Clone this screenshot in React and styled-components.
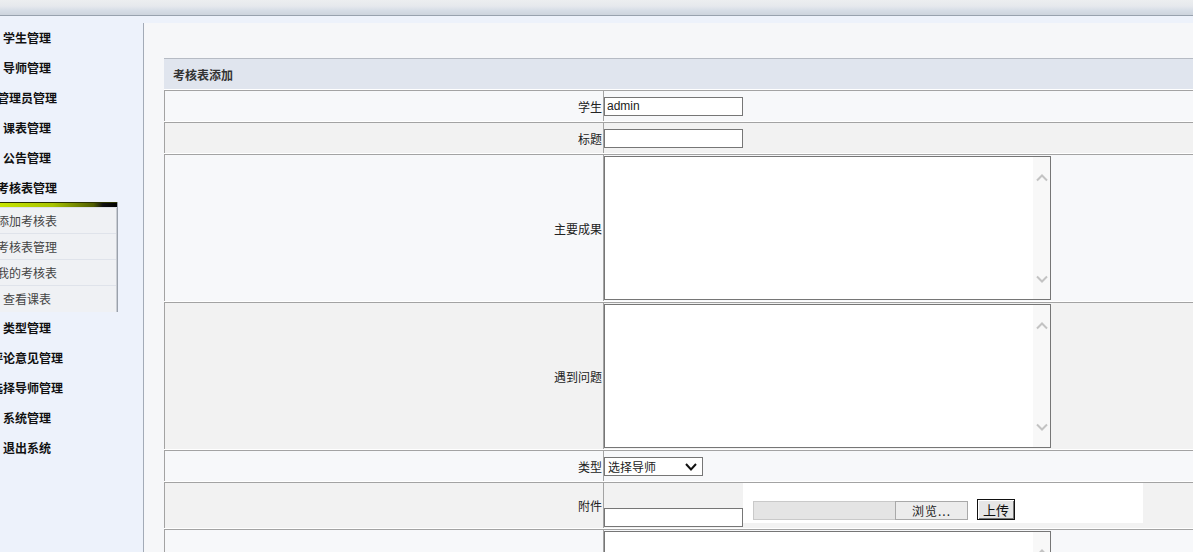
import React from "react";
import styled, { createGlobalStyle } from "styled-components";

const Global = createGlobalStyle`
  html, body { margin: 0; padding: 0; overflow: hidden; background: #f6f7f9; }
  body { font-family: "Liberation Sans", "Noto Sans CJK SC", sans-serif; font-size: 12px; color: #333; }
  * { box-sizing: border-box; }
`;

const Page = styled.div`
  width: 1193px;
  height: 552px;
  display: flex;
  flex-direction: column;
  overflow: hidden;
`;

const TopBar = styled.div`
  height: 16px;
  flex: none;
  background: linear-gradient(to bottom, #eceef0 0%, #e6e9ed 40%, #d6dde6 70%, #cdd4dd 100%);
  border-bottom: 1px solid #98a2ae;
`;

const Band = styled.div`
  height: 7px;
  flex: none;
  background: #edf2fb;
`;

const Body = styled.div`
  flex: 1;
  display: flex;
  min-height: 0;
`;

const Sidebar = styled.nav`
  width: 144px;
  flex: none;
  background: #edf2fb;
  border-right: 1px solid #a3abb7;
  box-shadow: 1px 0 0 #d9dee7;
  overflow: hidden;
`;

const MenuList = styled.div`
  margin-top: -1px;
`;

const MenuItem = styled.div`
  width: 54px;
  height: 30px;
  display: flex;
  align-items: center;
  justify-content: center;
  white-space: nowrap;
  font-weight: bold;
  font-size: 12px;
  color: #111;
`;

const SubMenu = styled.div`
  width: 118px;
  background: #eff1f4;
  border-right: 1px solid #9aa1ab;
  box-shadow: inset -1px 0 0 #c9cdd3;
`;

const SubBar = styled.div`
  height: 6px;
  border-top: 1px solid #2c3300;
  border-bottom: 1px solid #dde1e8;
  background: linear-gradient(to right, #c6e400 0%, #a8c400 45%, #4f5c00 80%, #111 88%, #000 100%);
`;

const SubItem = styled.div`
  height: 26px;
  width: 116px;
  border-bottom: 1px solid ${(p) => (p.last ? "transparent" : "#dfe3ea")};
  display: flex;
  align-items: center;
  color: #444;
`;

const SubText = styled.span`
  width: 54px;
  display: flex;
  justify-content: center;
  white-space: nowrap;
`;

const Main = styled.main`
  flex: 1;
  padding: 35px 0 0 20px;
  background: #f6f7f9;
  overflow: hidden;
`;

const Panel = styled.section`
  width: 1100px;
`;

const PanelHeader = styled.div`
  height: 31px;
  border-top: 1px solid #b6bbc4;
  background: #e0e5ee;
  display: flex;
  align-items: center;
  padding-left: 9px;
  font-weight: bold;
  color: #333;
`;

const FormTable = styled.table`
  width: 100%;
  border-collapse: separate;
  border-spacing: 0 1px;
  background: #fff;
`;

const Row = styled.tr`
  background: ${(p) => (p.alt ? "#f2f2f2" : "#f7f8fa")};
`;

const LabelCell = styled.td`
  width: 437px;
  height: ${(p) => p.h}px;
  padding: 0 1px 0 0;
  border-top: 1px solid #a3a3a3;
  border-left: 1px solid #a3a3a3;
  text-align: right;
  vertical-align: middle;
  color: #222;
  box-sizing: content-box;
`;

const ValueCell = styled.td`
  padding: 0;
  border-top: 1px solid #a3a3a3;
  border-left: 1px solid #a3a3a3;
  vertical-align: ${(p) => p.valign || "middle"};
`;

const TextInput = styled.input`
  display: block;
  width: 139px;
  height: 19px;
  border: 1px solid #767676;
  background: #fff;
  padding: 0 2px;
  font-family: "Liberation Sans", "Noto Sans CJK SC", sans-serif;
  font-size: 12px;
  color: #222;
  outline: none;
  margin-top: ${(p) => p.mt || 0}px;
`;

const TextBox = styled.div`
  width: 447px;
  height: 144px;
  margin: 1px 0;
  border: 1px solid #767676;
  background: #fff;
  display: flex;
`;

const Area = styled.textarea`
  flex: 1;
  border: none;
  resize: none;
  outline: none;
  background: transparent;
  font-family: "Liberation Sans", sans-serif;
  font-size: 12px;
`;

const Track = styled.div`
  width: 17px;
  background: #f8f8f8;
  display: flex;
  flex-direction: column;
  justify-content: space-between;
  align-items: center;
  padding: 17px 0 16px;
`;

const Chevron = ({ down }) => (
  <svg width="12" height="8" viewBox="0 0 12 8">
    <polyline
      points={down ? "1,1.5 6,6.5 11,1.5" : "1,6.5 6,1.5 11,6.5"}
      fill="none"
      stroke="#c3c3c3"
      strokeWidth="2"
    />
  </svg>
);

const LongText = () => (
  <TextBox>
    <Area />
    <Track>
      <Chevron />
      <Chevron down />
    </Track>
  </TextBox>
);

const SelectBox = styled.div`
  position: relative;
  width: 99px;
  height: 19px;
  border: 1px solid #767676;
  background: #fff;
  display: flex;
  align-items: center;
  padding-left: 3px;
  color: #222;
  font-family: "Noto Sans CJK SC", sans-serif;
  font-size: 12px;
`;

const SelectArrow = styled.svg`
  position: absolute;
  right: 5px;
  top: 5px;
`;

const FileRow = styled.div`
  display: flex;
  align-items: flex-start;
`;

const WhiteBox = styled.div`
  width: 400px;
  height: 40px;
  background: #fff;
  display: flex;
  align-items: flex-start;
  padding-left: 10px;
  gap: 9px;
`;

const FileField = styled.div`
  margin-top: 18px;
  display: flex;
  height: 19px;
`;

const FileName = styled.div`
  width: 142px;
  background: #e4e4e4;
  border: 1px solid #c9c9c9;
  border-right: none;
`;

const FileButton = styled.div`
  width: 73px;
  background: #ececec;
  border: 1px solid #a9a9a9;
  display: flex;
  align-items: center;
  justify-content: center;
  color: #222;
  letter-spacing: 1px;
  font-family: "Noto Sans CJK SC", sans-serif;
`;

const UploadButton = styled.button`
  margin-top: 16px;
  width: 38px;
  height: 21px;
  padding: 0;
  background: #e6e6e6;
  border: 1px solid #111;
  box-shadow: inset 1px 1px 0 #fff, inset -1px -1px 0 #777;
  font-family: "Noto Sans CJK SC", sans-serif;
  font-size: 13px;
  color: #111;
  line-height: 1;
`;

const topMenu = ["学生管理", "导师管理", "管理员管理", "课表管理", "公告管理", "考核表管理"];
const subMenu = ["添加考核表", "考核表管理", "我的考核表", "查看课表"];
const bottomMenu = ["类型管理", "评论意见管理", "选择导师管理", "系统管理", "退出系统"];

export default function App() {
  return (
    <Page>
      <Global />
      <TopBar />
      <Band />
      <Body>
        <Sidebar>
          <MenuList>
            {topMenu.map((m) => (
              <MenuItem key={m}>{m}</MenuItem>
            ))}
            <SubMenu>
              <SubBar />
              {subMenu.map((m, i) => (
                <SubItem key={m} last={i === subMenu.length - 1}>
                  <SubText>{m}</SubText>
                </SubItem>
              ))}
            </SubMenu>
            {bottomMenu.map((m) => (
              <MenuItem key={m}>{m}</MenuItem>
            ))}
          </MenuList>
        </Sidebar>
        <Main>
          <Panel>
            <PanelHeader>考核表添加</PanelHeader>
            <FormTable>
              <tbody>
                <Row>
                  <LabelCell h={30}>学生</LabelCell>
                  <ValueCell>
                    <TextInput defaultValue="admin" />
                  </ValueCell>
                </Row>
                <Row alt>
                  <LabelCell h={30}>标题</LabelCell>
                  <ValueCell>
                    <TextInput />
                  </ValueCell>
                </Row>
                <Row>
                  <LabelCell h={146}>主要成果</LabelCell>
                  <ValueCell valign="top">
                    <LongText />
                  </ValueCell>
                </Row>
                <Row alt>
                  <LabelCell h={146}>遇到问题</LabelCell>
                  <ValueCell valign="top">
                    <LongText />
                  </ValueCell>
                </Row>
                <Row>
                  <LabelCell h={30}>类型</LabelCell>
                  <ValueCell>
                    <SelectBox>
                      选择导师
                      <SelectArrow width="12" height="8" viewBox="0 0 12 8">
                        <polyline points="1,1 6,6.5 11,1" fill="none" stroke="#111" strokeWidth="2" />
                      </SelectArrow>
                    </SelectBox>
                  </ValueCell>
                </Row>
                <Row alt>
                  <LabelCell h={45}>附件</LabelCell>
                  <ValueCell valign="top">
                    <FileRow>
                      <TextInput mt={25} />
                      <WhiteBox>
                        <FileField>
                          <FileName />
                          <FileButton>浏览...</FileButton>
                        </FileField>
                        <UploadButton>上传</UploadButton>
                      </WhiteBox>
                    </FileRow>
                  </ValueCell>
                </Row>
                <Row>
                  <LabelCell h={146}></LabelCell>
                  <ValueCell valign="top">
                    <LongText />
                  </ValueCell>
                </Row>
              </tbody>
            </FormTable>
          </Panel>
        </Main>
      </Body>
    </Page>
  );
}
